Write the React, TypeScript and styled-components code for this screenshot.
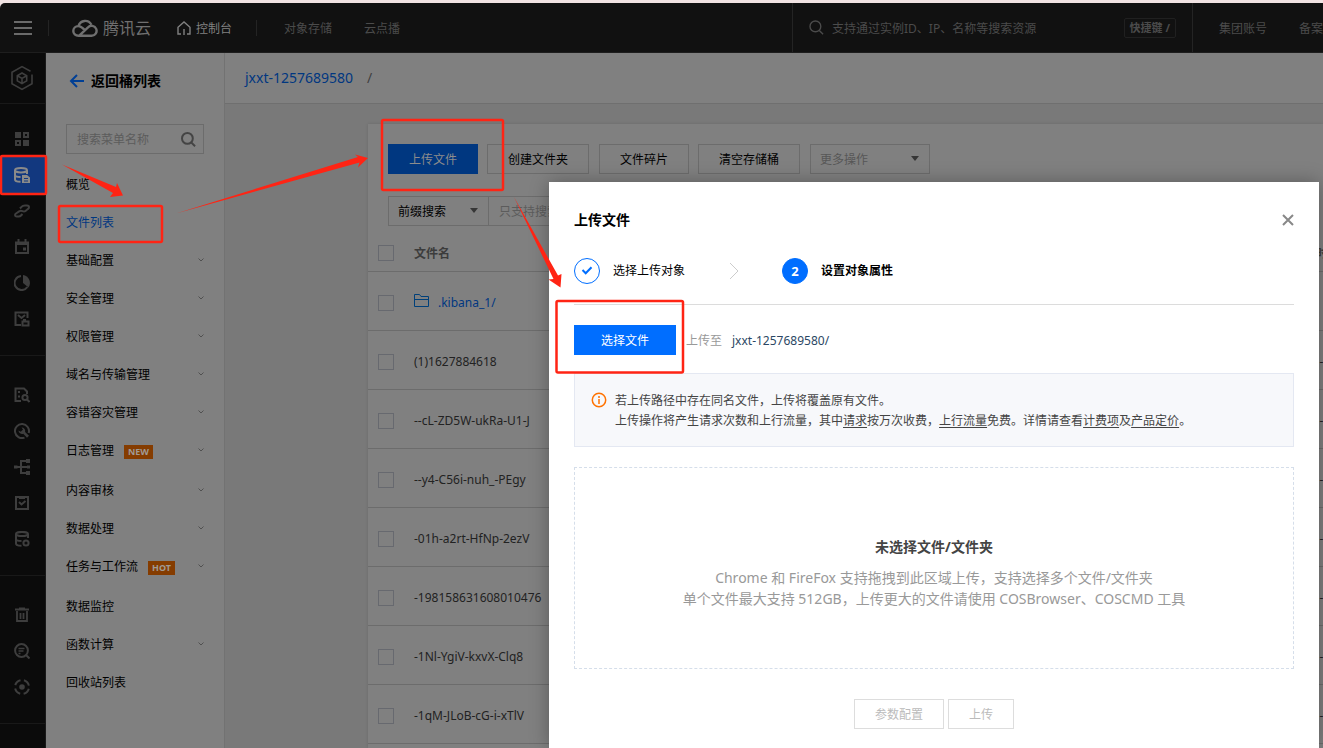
import React from "react";
import styled, { createGlobalStyle, css } from "styled-components";

const GlobalStyle = createGlobalStyle`
  *, *::before, *::after { box-sizing: border-box; }
  html, body, #root { height: 100%; }
  body {
    margin: 0;
    overflow: hidden;
    background: #f1e3e3;
    color: #000;
    font-family: "Noto Sans", "Noto Sans CJK SC", sans-serif;
    font-size: 12px;
    line-height: 20px;
  }
  button, input, select { font: inherit; color: inherit; margin: 0; }
  a { color: inherit; text-decoration: none; }
  svg { display: block; flex: none; }
`;

/* ---------- page frame ---------- */

const Page = styled.div`
  position: relative;
  display: flex;
  flex-direction: column;
  height: 100%;
  padding-top: 3px;
  overflow: hidden;
`;

const Body = styled.div`
  display: flex;
  flex: 1;
  min-height: 0;
`;

/* ---------- header ---------- */

const Header = styled.header`
  display: flex;
  flex: none;
  height: 50px;
  background: #111;
  border-bottom: 1px solid #1e1e1e;
  border-top-left-radius: 5px;
  color: #4b4b4b;
  white-space: nowrap;
`;

const HeaderNav = styled.nav`
  display: flex;
  flex: 1;
  align-items: center;
  min-width: 0;
  padding: 1px 0 0 14px;
`;

const IconButton = styled.button`
  display: flex;
  padding: 0;
  border: 0;
  background: none;
  cursor: pointer;
`;

const Divider = styled.span<{ $before: number; $after: number }>`
  width: 1px;
  height: 16px;
  margin: 0 ${(p) => p.$after}px 0 ${(p) => p.$before}px;
  background: #242424;
`;

const Brand = styled.a`
  display: flex;
  align-items: center;
  gap: 5px;
  margin-right: 26px;
  color: #6f6f6f;
  font-size: 16px;
`;

const HomeLink = styled.a`
  display: flex;
  align-items: center;
  gap: 5px;
  color: #808080;
  span { padding-top: 2px; }
`;

const ProductLinks = styled.div`
  display: flex;
  gap: 32px;
  padding-top: 2px;
`;

const SearchArea = styled.label`
  display: flex;
  flex: 0 0 401px;
  align-items: center;
  padding: 0 16px;
  border: solid #242424;
  border-width: 0 1px;
`;

const SearchInput = styled.input`
  flex: 1;
  min-width: 0;
  padding: 2px 0 0 8px;
  border: 0;
  outline: 0;
  background: none;
  &::placeholder { color: #4b4b4b; opacity: 1; }
`;

const Shortcut = styled.kbd`
  padding: 0 5px;
  border: 1px solid #202020;
  border-radius: 2px;
  font: bold 11px/18px "Noto Sans", "Noto Sans CJK SC", sans-serif;
`;

const AccountLinks = styled.div`
  display: flex;
  flex: 0 0 130px;
  align-items: center;
  gap: 32px;
  padding: 2px 0 0 26px;
  overflow: hidden;
`;

/* ---------- icon rail ---------- */

const Rail = styled.nav`
  flex: 0 0 46px;
  background: #0b0b0b;
  border-right: 1px solid #1a1a1a;
  color: #3e3e3e;
  overflow: hidden;
`;

const RailHome = styled.a`
  display: flex;
  align-items: center;
  justify-content: center;
  height: 51px;
  padding-right: 1px;
  border-bottom: 1px solid #191919;
`;

const RailGroup = styled.div<{ $top?: number }>`
  padding: ${(p) => p.$top ?? 21}px 0 18px;
  border-bottom: 1px solid #191919;
`;

const RailItem = styled.a<{ $active?: boolean }>`
  display: flex;
  align-items: center;
  justify-content: center;
  height: 36px;
  padding-right: 1px;
  ${(p) => p.$active && css`
    background: #12387f;
    color: #8a8a8a;
  `}
`;

/* ---------- side menu ---------- */

const SideMenu = styled.aside`
  flex: 0 0 179px;
  min-width: 0;
  padding: 0 20px;
  background: #808080;
  border-right: 1px solid #727272;
`;

const BackLink = styled.a`
  display: flex;
  align-items: center;
  gap: 7px;
  height: 56px;
  padding-left: 3px;
  font-size: 14px;
  font-weight: bold;
`;

const MenuSearch = styled.label`
  display: flex;
  align-items: center;
  height: 30px;
  margin-top: 15px;
  padding: 0 7px 0 10px;
  border: 1px solid #6c6c6c;
  color: #444;
  input {
    flex: 1;
    min-width: 0;
    padding: 2px 0 0;
    border: 0;
    outline: 0;
    background: none;
  }
  input::placeholder { color: #5c5c5c; opacity: 1; }
`;

const MenuList = styled.ul`
  margin: 12px 0 0;
  padding: 0;
  list-style: none;
`;

const MenuLink = styled.a<{ $active?: boolean; $tall?: boolean }>`
  display: flex;
  align-items: center;
  justify-content: space-between;
  height: ${(p) => (p.$tall ? 40 : 38)}px;
  padding-bottom: ${(p) => (p.$tall ? 2 : 0)}px;
  color: ${(p) => (p.$active ? "#003780" : "#000")};
  > svg { margin-bottom: 3px; }
`;

const Badge = styled.span`
  display: inline-block;
  margin-left: 10px;
  padding: 0 4px;
  background: #853c00;
  color: #a09a94;
  font: bold 9px/14px "Noto Sans", sans-serif;
`;

/* ---------- content ---------- */

const Main = styled.main`
  display: flex;
  flex: 1;
  flex-direction: column;
  min-width: 0;
  background: #797979;
`;

const Crumbs = styled.div`
  display: flex;
  flex: none;
  align-items: center;
  gap: 14px;
  height: 51px;
  padding-left: 20px;
  background: #808080;
  border-bottom: 1px solid #6f6f6f;
  color: #404040;
  font-size: 14px;
  a { color: #003780; }
`;

const Card = styled.section`
  flex: 1;
  min-height: 0;
  margin: 20px 0 0 143px;
  background: #808080;
  box-shadow: 0 0 3px rgba(0, 0, 0, 0.12);
  overflow: hidden;
`;

const Toolbar = styled.div`
  display: flex;
  gap: 10px;
  padding: 20px 20px 0;
`;

const ButtonPair = styled.div`
  display: flex;
  gap: 9px;
`;

const buttonBase = css`
  height: 30px;
  padding: 2px 20px 0;
  border: 1px solid;
  white-space: nowrap;
  cursor: pointer;
`;

const ToolButton = styled.button<{ $primary?: boolean }>`
  ${buttonBase}
  border-color: ${(p) => (p.$primary ? "#003780" : "#6c6c6c")};
  background: ${(p) => (p.$primary ? "#003780" : "transparent")};
  color: ${(p) => (p.$primary ? "#8c8c8c" : "#000")};
`;

const SelectBox = styled.div<{ $width: number }>`
  display: grid;
  align-items: center;
  width: ${(p) => p.$width}px;
  color: #363636;
  > * { grid-area: 1 / 1; }
  > svg { justify-self: end; margin-right: 9px; pointer-events: none; }
`;

const Select = styled.select<{ $muted?: boolean }>`
  width: 100%;
  height: 30px;
  padding: 2px 9px 0;
  border: 1px solid #6c6c6c;
  border-radius: 0;
  background: none;
  color: ${(p) => (p.$muted ? "#575757" : "#000")};
  appearance: none;
`;

const FilterBar = styled.div`
  display: flex;
  padding: 22px 20px 9px;
`;

const FilterInput = styled.input`
  width: 300px;
  height: 30px;
  padding: 0 10px;
  border: 1px solid #6c6c6c;
  border-left-width: 0;
  background: none;
  &::placeholder { color: #5c5c5c; opacity: 1; }
`;

const FileTable = styled.table`
  width: 100%;
  border-collapse: separate;
  border-spacing: 0;
  table-layout: fixed;
  color: #222;
  white-space: nowrap;
  th, td {
    height: 59px;
    padding: 3px 0 0;
    border-bottom: 1px solid #6c6c6c;
    text-align: left;
  }
  th { height: 37px; padding-top: 1px; color: #3c3c3c; }
  th:first-child, td:first-child { width: 46px; padding-left: 10px; }
  th:first-child { padding-top: 0; }
  th:last-child, td:last-child { width: 31px; }
`;

const FileLink = styled.a`
  display: flex;
  align-items: center;
  gap: 9px;
  color: #003780;
  svg { margin-bottom: 5px; }
`;

const Check = styled.input.attrs({ type: "checkbox" })`
  display: block;
  width: 16px;
  height: 16px;
  border: 1px solid #67696f;
  appearance: none;
`;

/* ---------- dialog ---------- */

const Backdrop = styled.div`
  position: absolute;
  inset: 0;
  display: flex;
  justify-content: flex-end;
  padding: 182px 4px 0 0;
`;

const Dialog = styled.section`
  width: 770px;
  padding: 0 25px;
  background: #fff;
  box-shadow: 0 0 18px rgba(0, 0, 0, 0.3);
`;

const DialogHead = styled.div`
  display: flex;
  align-items: center;
  justify-content: space-between;
  height: 76px;
  h2 { margin: 0; font-size: 14px; font-weight: bold; }
`;

const Steps = styled.ol`
  display: flex;
  align-items: center;
  height: 47px;
  margin: 0;
  padding: 0 0 21px;
  border-bottom: 1px solid #dcdcdc;
  list-style: none;
`;

const Step = styled.li<{ $current?: boolean }>`
  display: flex;
  align-items: center;
  gap: 13px;
  font-weight: ${(p) => (p.$current ? "bold" : "normal")};
  > svg { margin: 0 43px 0 31px; }
`;

const StepMark = styled.span<{ $current?: boolean }>`
  display: flex;
  align-items: center;
  justify-content: center;
  width: 26px;
  height: 26px;
  border: 1px solid #006eff;
  border-radius: 50%;
  background: ${(p) => (p.$current ? "#006eff" : "#fff")};
  color: #fff;
  font-size: 13px;
`;

const UploadRow = styled.div`
  display: flex;
  align-items: center;
  gap: 10px;
  padding: 20px 0 18px;
  color: #999;
  span { padding-top: 2px; }
  span:last-child { color: #2b4764; }
`;

const ChooseButton = styled.button`
  ${buttonBase}
  width: 102px;
  border-color: #006eff;
  background: #006eff;
  color: #fff;
`;

const Notice = styled.div`
  display: flex;
  gap: 8px;
  padding: 17px 16px 15px;
  border: 1px solid #e4e8f2;
  background: #f7f8fb;
  color: #444;
  svg { margin-top: 1px; }
  p { margin: 0; }
  a { text-decoration: underline; text-underline-offset: 2px; }
`;

const DropZone = styled.div`
  display: flex;
  flex-direction: column;
  align-items: center;
  justify-content: center;
  height: 202px;
  margin-top: 20px;
  padding-top: 8px;
  border: 1px dashed #d5deea;
  color: #999;
  font-size: 14px;
  line-height: 21px;
  text-align: center;
  h3 { margin: 0 0 10px; color: #444; font-size: 14px; }
  p { margin: 0; }
`;

const DialogFoot = styled.div`
  display: flex;
  justify-content: center;
  gap: 4px;
  padding: 30px 0;
`;

const DisabledButton = styled.button`
  ${buttonBase}
  border-color: #ddd;
  background: #fff;
  color: #bbb;
  cursor: default;
`;

const Annotations = styled.svg`
  position: absolute;
  top: 0;
  left: 0;
  pointer-events: none;
`;

/* ---------- icons ---------- */

const Glyph = ({ children, size = 16 }: { children: React.ReactNode; size?: number }) => (
  <svg width={size} height={size} viewBox="0 0 16 16" fill="none" stroke="currentColor" strokeWidth="2" aria-hidden="true">
    {children}
  </svg>
);

const CubeIcon = () => (
  <svg width="24" height="26" viewBox="0 0 24 26" fill="none" stroke="currentColor" strokeWidth="1.6" aria-hidden="true">
    <path d="M20.5 6.2 12 1.6 2 7.2v11.6l10 5.6 10-5.6V9.5" />
    <path d="m12 8 4.7 2.7v5.2L12 18.5l-4.7-2.6v-5.2zM7.3 10.7 12 13.4l4.7-2.7M12 13.4v5.1" />
  </svg>
);

const Magnifier = ({ size, width }: { size: number; width: number }) => (
  <svg width={size} height={size} viewBox="0 0 15 15" fill="none" stroke="currentColor" strokeWidth={width} aria-hidden="true">
    <circle cx="6.4" cy="6.4" r="5.4" />
    <path d="m10.3 10.6 3.8 3.6" />
  </svg>
);

const Caret = () => (
  <svg width="10" height="6" aria-hidden="true"><path d="M0 0h8L4 5z" fill="currentColor" /></svg>
);

const railGroups: { label: string; icon: React.ReactNode; active?: boolean }[][] = [
  [
    { label: "产品总览", icon: <><path d="M1 1h6v6H1zM9 9h6v6H9z" fill="currentColor" stroke="none" /><path d="M10 2h4v4h-4zM2 10h4v4H2z" /></> },
    { label: "存储", active: true, icon: <><ellipse cx="7" cy="3.2" rx="6" ry="2.2" /><path d="M1 3.2v9.3c0 1.4 2.5 2.3 5.5 2.3M13 3.2V7M1 8c0 1.3 2.5 2 5.5 2" /><path d="M8 8h5l3 2.5V16H8z" fill="currentColor" stroke="none" /><path d="M10 11.5h4M10 14h4" stroke="#12387f" strokeWidth="1" /></> },
    { label: "链路", icon: <path d="M6 5.5 7.5 3.8C8.500 2.600 9.500 2.500 11 2.500h2c1.300 0 2 .7 2 1.700 0 .9-.5 1.400-1.200 1.900L11.500 8c-1 .8-2 .7-3 .2s-2-.8-3 0L2 10.500c-1 .7-1.200 1.800-.5 2.600.6.6 1.300.4 2 .4h1.200c1 0 1.700-.3 2.300-1L8.500 11" /> },
    { label: "日程", icon: <><path d="M2 3.5h12V14H2zM4.5 0v3M11.5 0v3M2 5h12" /><path d="M9 8.5h3v3H9z" fill="currentColor" stroke="none" /></> },
    { label: "统计", icon: <><path d="M7 1.1A7 7 0 1 0 13.4 12" /><path d="M9 0a8 8 0 0 1 5.5 12.500L9 8z" fill="currentColor" stroke="none" /></> },
    { label: "归档", icon: <><path d="M7 14H1.500V1.500h12V7M4 4l3.500 3L11 4" /><path d="M8.500 10.500h6V14.500h-6zM9 9h3" /></> },
  ],
  [
    { label: "文档检索", icon: <><path d="M7 14H1.500V1.500H10L13 4.500V7M4 5h2M4 9.500h2" /><circle cx="11" cy="10.5" r="2.6" /><path d="m13 12.500 2.500 2.500" /></> },
    { label: "运维工具", icon: <><path d="M10.500 14.600A7 7 0 1 1 14.700 10" /><path d="M4.500 7.500a3.600 3.600 0 0 0 4.800 3.300l3.700 3.900 2-2-3.900-3.700A3.600 3.600 0 0 0 7.500 4.500L9 6.500 6.800 8.800z" fill="currentColor" stroke="none" /></> },
    { label: "拓扑", icon: <><path d="M1 8h13M12 2H7v12h5" /><path d="M12 0h4v4h-4zM12 12h4v4h-4zM0 6.500h3.500v3H0zM13 6.500h3v3h-3z" fill="currentColor" stroke="none" /></> },
    { label: "任务", icon: <><path d="M2 2h12v12H2zM5 7l2.500 2.500L11.500 6" /><path d="M5 1h6v3H5z" fill="currentColor" stroke="none" /></> },
    { label: "数据库", icon: <><ellipse cx="8" cy="3" rx="6" ry="2.1" /><path d="M2 3v9.500c0 1.500 2.500 2.300 5.500 2.300M14 3v4M2 8c0 1.300 2.500 2 5.500 2" /><circle cx="12" cy="12" r="2.6" /></> },
  ],
  [
    { label: "回收站", icon: <path d="M1 2.500h14M5 1.500h6M3 4v10h10V4M6.500 6v6M9.500 6v6" strokeWidth="1.8" /> },
    { label: "日志检索", icon: <><circle cx="7.5" cy="7.5" r="6.4" /><path d="m12 12 3.500 3.500" /><path d="M4.500 5.500h6M4.500 8h5M4.500 10.500h2" strokeWidth="1.5" /></> },
    { label: "监控", icon: <><circle cx="8" cy="8" r="2.8" fill="currentColor" stroke="none" /><circle cx="8" cy="8" r="7" strokeDasharray="7.5 3.5" strokeDashoffset="-1.75" /></> },
  ],
];

const menuItems: { label: string; more?: boolean; active?: boolean; badge?: string }[] = [
  { label: "概览" },
  { label: "文件列表", active: true },
  { label: "基础配置", more: true },
  { label: "安全管理", more: true },
  { label: "权限管理", more: true },
  { label: "域名与传输管理", more: true },
  { label: "容错容灾管理", more: true },
  { label: "日志管理", more: true, badge: "NEW" },
  { label: "内容审核", more: true },
  { label: "数据处理", more: true },
  { label: "任务与工作流", more: true, badge: "HOT" },
  { label: "数据监控" },
  { label: "函数计算", more: true },
  { label: "回收站列表" },
];

const files = [
  { name: "(1)1627884618", date: "2021-08" },
  { name: "--cL-ZD5W-ukRa-U1-J", date: "2021-12" },
  { name: "--y4-C56i-nuh_-PEgy", date: "2021-12" },
  { name: "-01h-a2rt-HfNp-2ezV", date: "2021-08" },
  { name: "-198158631608010476", date: "2021-12" },
  { name: "-1Nl-YgiV-kxvX-Clq8", date: "2021-12" },
  { name: "-1qM-JLoB-cG-i-xTlV", date: "2021-08" },
];

export default function App() {
  return (
    <>
      <GlobalStyle />
      <Page>
        <Header>
          <HeaderNav>
            <IconButton aria-label="菜单">
              <svg width="18" height="14" stroke="#6a6a6a" strokeWidth="2"><path d="M0 1h18M0 7h18M0 13h18" /></svg>
            </IconButton>
            <Divider $before={16} $after={23} />
            <Brand href="#">
              <svg width="26" height="20" viewBox="0 0 26 20" fill="none" stroke="currentColor" strokeWidth="2.4">
                <path d="M6.500 7.800A7 7 0 0 1 19.300 6.500M6.500 17.800C3.500 17.800 1.300 15.700 1.300 13s2.200-4.900 4.900-4.900c1.900 0 3 .7 4.500 2.100l2 1.800M6.500 17.800h13a5 5 0 1 0-3.500-8.500L7 17.800" />
              </svg>
              腾讯云
            </Brand>
            <HomeLink href="#">
              <svg width="14" height="14" viewBox="0 0 14 14" fill="none" stroke="currentColor" strokeWidth="1.4">
                <path d="M4 13H1V6.200L7 1l6 5.200V13h-3M7 8v6" />
              </svg>
              <span>控制台</span>
            </HomeLink>
            <Divider $before={24} $after={27} />
            <ProductLinks><a href="#">对象存储</a><a href="#">云点播</a></ProductLinks>
          </HeaderNav>
          <SearchArea>
            <Magnifier size={15} width={1.4} />
            <SearchInput placeholder="支持通过实例ID、IP、名称等搜索资源" aria-label="搜索资源" />
            <Shortcut>快捷键 /</Shortcut>
          </SearchArea>
          <AccountLinks><a href="#">集团账号</a><a href="#">备案</a></AccountLinks>
        </Header>

        <Body>
          <Rail aria-label="产品">
            <RailHome href="#" aria-label="控制台首页"><CubeIcon /></RailHome>
            {railGroups.map((group, i) => (
              <RailGroup key={i} $top={i === 0 ? 17 : undefined}>
                {group.map((item) => (
                  <RailItem key={item.label} href="#" aria-label={item.label} $active={item.active}>
                    <Glyph>{item.icon}</Glyph>
                  </RailItem>
                ))}
              </RailGroup>
            ))}
          </Rail>

          <SideMenu>
            <BackLink href="#">
              <svg width="15" height="14" fill="none" stroke="#003f95" strokeWidth="2"><path d="M15 7H2M8 1 2 7l6 6" /></svg>
              返回桶列表
            </BackLink>
            <MenuSearch>
              <input placeholder="搜索菜单名称" aria-label="搜索菜单名称" />
              <Magnifier size={15} width={2} />
            </MenuSearch>
            <MenuList>
              {menuItems.map((item) => (
                <li key={item.label}>
                  <MenuLink href="#" $active={item.active} $tall={!!item.badge}>
                    <span>{item.label}{item.badge && <Badge>{item.badge}</Badge>}</span>
                    {item.more && (
                      <svg width="6" height="4" fill="none" stroke="#505050"><path d="m.5.5 2.500 2.500L5.500.5" /></svg>
                    )}
                  </MenuLink>
                </li>
              ))}
            </MenuList>
          </SideMenu>

          <Main>
            <Crumbs><a href="#">jxxt-1257689580</a><span>/</span></Crumbs>
            <Card>
              <Toolbar>
                <ButtonPair>
                  <ToolButton $primary>上传文件</ToolButton>
                  <ToolButton>创建文件夹</ToolButton>
                </ButtonPair>
                <ButtonPair>
                  <ToolButton>文件碎片</ToolButton>
                  <ToolButton>清空存储桶</ToolButton>
                </ButtonPair>
                <SelectBox $width={120}>
                  <Select $muted aria-label="更多操作"><option>更多操作</option></Select>
                  <Caret />
                </SelectBox>
              </Toolbar>
              <FilterBar>
                <SelectBox $width={101}>
                  <Select aria-label="搜索方式"><option>前缀搜索</option></Select>
                  <Caret />
                </SelectBox>
                <FilterInput placeholder="只支持搜索当前虚拟目录下的对象" aria-label="搜索对象" />
              </FilterBar>
              <FileTable>
                <thead>
                  <tr><th><Check aria-label="全选" /></th><th>文件名</th><th>修改时间</th></tr>
                </thead>
                <tbody>
                  <tr>
                    <td><Check aria-label=".kibana_1/" /></td>
                    <td>
                      <FileLink href="#">
                        <svg width="15" height="13" fill="none" stroke="#00407a"><path d="M.5.5h5l1.500 2h7.500v10H.5zM.5 5.500h14" /></svg>
                        .kibana_1/
                      </FileLink>
                    </td>
                    <td />
                  </tr>
                  {files.map((file) => (
                    <tr key={file.name}>
                      <td><Check aria-label={file.name} /></td>
                      <td>{file.name}</td>
                      <td>{file.date}</td>
                    </tr>
                  ))}
                </tbody>
              </FileTable>
            </Card>
          </Main>
        </Body>

        <Backdrop>
          <Dialog role="dialog" aria-label="上传文件">
            <DialogHead>
              <h2>上传文件</h2>
              <IconButton aria-label="关闭">
                <svg width="12" height="12" stroke="#888" strokeWidth="2"><path d="m1 1 10 10M11 1 1 11" /></svg>
              </IconButton>
            </DialogHead>
            <Steps>
              <Step>
                <StepMark>
                  <svg width="12" height="9" fill="none" stroke="#006eff" strokeWidth="2"><path d="m1.500 4 3.200 3.200L10.500 1.200" /></svg>
                </StepMark>
                选择上传对象
                <svg width="10" height="16" fill="none" stroke="#ccc"><path d="m1 0 8 8-8 8" /></svg>
              </Step>
              <Step $current><StepMark $current>2</StepMark>设置对象属性</Step>
            </Steps>
            <UploadRow>
              <ChooseButton>选择文件</ChooseButton>
              <span>上传至</span>
              <span>jxxt-1257689580/</span>
            </UploadRow>
            <Notice>
              <svg width="16" height="16" fill="none" stroke="#ff7200" strokeWidth="1.5">
                <circle cx="8" cy="8" r="6.7" /><path d="M8 4v2M8 7v5" />
              </svg>
              <div>
                <p>若上传路径中存在同名文件，上传将覆盖原有文件。</p>
                <p>
                  上传操作将产生请求次数和上行流量，其中<a href="#">请求</a>按万次收费，<a href="#">上行流量</a>免费。详情请查看<a href="#">计费项</a>及<a href="#">产品定价</a>。
                </p>
              </div>
            </Notice>
            <DropZone>
              <h3>未选择文件/文件夹</h3>
              <p>Chrome 和 FireFox 支持拖拽到此区域上传，支持选择多个文件/文件夹</p>
              <p>单个文件最大支持 512GB，上传更大的文件请使用 COSBrowser、COSCMD 工具</p>
            </DropZone>
            <DialogFoot>
              <DisabledButton disabled>参数配置</DisabledButton>
              <DisabledButton disabled>上传</DisabledButton>
            </DialogFoot>
          </Dialog>
        </Backdrop>

        <Annotations width="700" height="400" aria-hidden="true">
          <g fill="none" stroke="#ff2414" strokeWidth="2.5">
            <rect x="1" y="156" width="45" height="38" rx="1.5" />
            <rect x="59" y="206" width="103" height="36" rx="1.5" />
            <rect x="382" y="120" width="121" height="70" rx="1.5" />
            <rect x="556.5" y="301" width="126.5" height="71.5" rx="1.5" />
          </g>
          <g fill="#ff2414">
            <path d="m62 164.500 54 22.500 1-4 6 12.500-13 1.500 3-4z" />
            <path d="m176 213.500 182-56.500-3-2.500 13 3.500-10 9.500 1.500-5z" />
            <path d="m514 197 44 78.500 3.500-1.500-1 13.500-12-8 5-.5z" />
          </g>
        </Annotations>
      </Page>
    </>
  );
}
